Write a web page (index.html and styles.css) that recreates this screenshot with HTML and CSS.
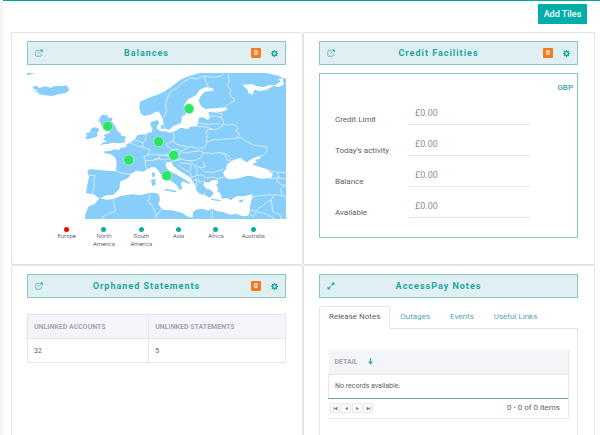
FILE: index.html
```html
<!DOCTYPE html>
<html lang="en">
<head>
<meta charset="utf-8">
<title>Dashboard</title>
<link rel="stylesheet" href="styles.css">
</head>
<body>
<svg class="defs" width="0" height="0" aria-hidden="true">
  <symbol id="open" viewBox="0 0 16 16"><path d="M9 3H3.500Q1.500 3 1.500 5V12.500Q1.500 14.500 3.500 14.500H10.500Q12.500 14.500 12.500 12.500V9M6.500 9.500L13 3" fill="none" stroke="currentColor" stroke-width="1.200"/><path d="M9.500 1H15.500V7Z" fill="currentColor"/></symbol>
  <symbol id="expand" viewBox="0 0 16 16"><path d="M4 12L7 9M9 7L12 4" stroke="currentColor" stroke-width="2.200"/><path d="M9 1H15V7ZM1 9V15H7Z" fill="currentColor"/></symbol>
  <symbol id="gear" viewBox="0 0 16 16"><circle cx="8" cy="8" r="4.300" fill="none" stroke="currentColor" stroke-width="3.200"/><path d="M8 0V3M8 13V16M0 8H3M13 8H16M2.300 2.300L4.500 4.500M11.500 11.500L13.700 13.700M13.700 2.300L11.500 4.500M4.500 11.500L2.300 13.700" stroke="currentColor" stroke-width="2.800"/></symbol>
</svg>
<main class="page">
  <div class="toolbar"><button class="add" type="button">Add Tiles</button></div>
  <div class="tiles">
    <section class="tile">
      <header class="tile-head">
        <button class="icon" type="button" aria-label="Open"><svg><use href="#open"/></svg></button>
        <h2>Balances</h2>
        <div class="actions"><span class="badge">0</span><button class="icon gear" type="button" aria-label="Settings"><svg><use href="#gear"/></svg></button></div>
      </header>
      <svg class="map" viewBox="21 24 777 438" role="img" aria-label="Map of Europe">
        <g class="land">
          <path d="M21 24H45L32 28L21 31Z"/>
          <path d="M37 66L50 62L58 69L75 64L92 68L108 62L125 64L140 61L148 75L137 84L118 87L95 93L70 90L55 88L58 83L44 80L54 76L42 73Z"/>
          <path d="M236 166L246 149L264 151L262 157L278 159L274 169L286 183L292 197L302 205L305 213L318 214L314 226L316 232L300 235L278 233L264 237L250 238L241 242L246 234L262 229L249 224L256 215L251 209L268 205L269 198L259 192L250 178L244 184L242 174Z"/>
          <path d="M212 192L222 187L236 189L237 199L231 202L233 214L220 218L201 223L195 219L202 212L196 205L210 202Z"/>
          <path d="M540 24L510 32L485 42L468 55L450 68L432 80L410 90L390 97L360 110L358 128L362 145L372 153L390 149L405 142L417 139L418 160L408 164L393 168L391 182L397 189L396 201L384 203L380 207L352 210L344 224L332 232L320 238L319 246L301 249L298 255L284 253L271 258L252 259L254 265L272 268L285 277L290 292L288 319L265 317L235 315L216 313L207 313L202 320L207 335L202 360L198 384L215 387L224 389L232 397L240 400L236 402L225 416L205 425L196 448L195 462H798V40L790 40L775 32L740 24Z"/>
        </g>
        <g class="sea">
          <path d="M415 140L427 157L431 175L436 192L448 194L459 184L483 174L486 153L497 150L492 120L505 102L529 90L538 75L557 66L577 69L581 77L555 80L541 94L536 108L543 124L556 132L618 127L622 135L604 140L565 141L570 158L564 165L549 157L537 158L534 174L530 184L510 185L505 193L483 188L468 197L450 203L436 199L424 199L411 192L411 182L418 174L412 165L393 170L388 160Z"/>
          <path d="M241 400L258 391L280 390L298 372L300 350L325 338L333 326L350 317L370 320L382 313L394 307L404 306L413 314L421 326L434 340L454 349L470 360L477 370L471 379L455 374L433 371L434 376L466 382L473 375L487 371L483 357L488 349L505 356L511 353L494 343L474 331L456 322L443 313L437 303L438 292L454 290L459 301L475 315L493 326L512 338L517 349L526 360L529 375L538 386L553 390L553 381L559 385L561 374L550 360L553 351L565 353L576 346L592 345L595 355L588 358L594 368L592 378L602 387L606 402L621 399L632 405L650 394L672 394L698 388L694 407L690 426L689 440L684 452L668 454L650 447L630 449L610 441L589 438L577 430L565 437L548 431L527 434L519 442L518 458L501 454L486 443L456 436L435 435L425 431L415 418L420 404L417 389L408 384L390 383L361 391L340 388L303 392L280 402L260 404Z"/>
          <path d="M609 322L619 312L620 300L634 288L650 281L664 280L669 286L690 295L704 301L738 312L760 327L752 339L721 341L694 333L680 333L656 340L630 343L616 338Z"/>
          <path d="M684 289L702 278L720 275L721 281L704 284L711 290L697 298L684 296Z"/>
          <path d="M667 59L700 58L709 64L731 66L750 60L766 61L782 49L775 42L788 40L791 59L775 66L760 62L741 74L720 78L702 74L698 90L684 83L684 76Z"/>
        </g>
        <g class="land">
          <path d="M422 182L432 178L434 190L424 193ZM395 327L400 320L404 322L404 335L398 337ZM393 344L406 341L407 360L397 363ZM573 401L604 405L599 409L574 405ZM657 406L673 403L667 412L658 411ZM552 375L565 371L581 382L577 391L568 398L555 390Z"/>
        </g>
        <g class="borders">
          <path d="M432 157L440 134L436 117L444 95L453 77L469 72L490 52L510 38L530 42L552 33M552 33L558 52L565 65M552 33L580 37L603 34L612 25M624 27L628 49L622 58L632 77L630 92L646 105L629 115L613 128"/>
          <path d="M571 140L608 146L604 157L611 170L607 183L588 194L576 192L552 185L529 184M537 174L560 178L582 177L600 176M564 153L588 153L606 159M607 178L625 180L644 178L654 190L647 199L660 208L646 220L575 225L559 232L561 212L558 198L576 192M646 220L666 218L678 228L700 240L741 246L740 260L728 272L711 275"/>
          <path d="M459 198L463 215L459 228L468 237L501 246L519 246L535 252L553 248L562 233M459 228L438 236L441 244L457 254L449 267L428 272M457 254L472 253L484 260L501 249M484 260L492 264L519 260L536 258L552 263L541 279L525 286L502 287L482 282L474 274L484 260"/>
          <path d="M379 205L377 222L368 234L370 247L389 254L384 270L371 275L375 285L377 303L383 315M329 235L343 238L352 243L370 247M344 229L354 227L368 234M384 270L405 268L420 270L418 280L399 286L375 287M418 270L438 270L450 277L472 277M399 286L410 280L434 285L454 280L469 285L484 281M454 291L465 287L480 285M480 294L510 296L514 310L507 321L485 309L474 298M511 290L525 302L532 317L529 332L514 337L511 324M525 301L542 308L555 306L551 289M542 308L552 320L582 322L611 312M530 332L548 329L556 339L580 336L594 342L610 336M518 347L530 342L530 365M536 342L538 352L554 349M552 263L579 266L597 262L614 268L620 285L634 288M608 262L624 269L632 281L624 288M287 317L300 324L333 328M207 331L226 331L221 347L223 365L217 385"/>
          <path d="M279 404L285 430L288 438L262 447L246 458L246 462M391 387L384 411L397 421L407 450L408 462M407 455L420 438L425 432M577 431L576 462M689 447L699 455L715 430L730 420L754 404L762 389L703 393L689 411M689 439L704 435L712 442L731 444L754 455L765 462M754 404L758 440L779 448L784 462M762 389L789 393M736 311L765 321L798 323M748 341L775 338L798 342M773 324L777 340L768 346L785 360L798 361M794 361L781 373L786 389L798 398"/>
        </g>
        <g class="pins"><circle cx="263" cy="184" r="15"/><circle cx="326" cy="285" r="15"/><circle cx="416" cy="230" r="15"/><circle cx="507" cy="131" r="15"/><circle cx="461" cy="271" r="15"/><circle cx="440" cy="332" r="15"/></g>
      </svg>
      <ul class="regions">
        <li class="current">Europe</li><li>North America</li><li>South America</li><li>Asia</li><li>Africa</li><li>Australia</li>
      </ul>
    </section>

    <section class="tile">
      <header class="tile-head">
        <button class="icon" type="button" aria-label="Open"><svg><use href="#open"/></svg></button>
        <h2>Credit Facilities</h2>
        <div class="actions"><span class="badge">0</span><button class="icon gear" type="button" aria-label="Settings"><svg><use href="#gear"/></svg></button></div>
      </header>
      <form class="credit">
        <div class="currency">GBP</div>
        <div class="field"><label for="limit">Credit Limit</label><input id="limit" value="£0.00" readonly></div>
        <div class="field"><label for="activity">Today's activity</label><input id="activity" value="£0.00" readonly></div>
        <div class="field"><label for="balance">Balance</label><input id="balance" value="£0.00" readonly></div>
        <div class="field"><label for="available">Available</label><input id="available" value="£0.00" readonly></div>
      </form>
    </section>

    <section class="tile">
      <header class="tile-head">
        <button class="icon" type="button" aria-label="Open"><svg><use href="#open"/></svg></button>
        <h2>Orphaned Statements</h2>
        <div class="actions"><span class="badge">0</span><button class="icon gear" type="button" aria-label="Settings"><svg><use href="#gear"/></svg></button></div>
      </header>
      <table class="statements">
        <thead><tr><th>UNLINKED ACCOUNTS</th><th>UNLINKED STATEMENTS</th></tr></thead>
        <tbody><tr><td>32</td><td>5</td></tr></tbody>
      </table>
    </section>

    <section class="tile">
      <header class="tile-head">
        <button class="icon" type="button" aria-label="Expand"><svg><use href="#expand"/></svg></button>
        <h2>AccessPay Notes</h2>
      </header>
      <nav class="tabs"><a class="active" href="#release">Release Notes</a><a href="#outages">Outages</a><a href="#events">Events</a><a href="#links">Useful Links</a></nav>
      <div class="panel" id="release">
        <div class="grid">
          <table>
            <thead><tr><th>DETAIL <svg class="sort" viewBox="0 0 6 8"><path d="M3 0V6" stroke="currentColor" stroke-width="1.200"/><path d="M0 4H6L3 8Z" fill="currentColor"/></svg></th></tr></thead>
            <tbody><tr><td>No records available.</td></tr></tbody>
          </table>
          <div class="pager">
            <div class="pages">
              <button type="button" aria-label="First page"><svg viewBox="0 0 8 8"><path d="M1 1H2V7H1ZM7 1V7L2 4Z"/></svg></button>
              <button type="button" aria-label="Previous page"><svg viewBox="0 0 8 8"><path d="M6 1V7L2 4Z"/></svg></button>
              <button type="button" aria-label="Next page"><svg viewBox="0 0 8 8"><path d="M2 1V7L6 4Z"/></svg></button>
              <button type="button" aria-label="Last page"><svg viewBox="0 0 8 8"><path d="M6 1H7V7H6ZM1 1V7L6 4Z"/></svg></button>
            </div>
            <span>0 - 0 of 0 items</span>
          </div>
        </div>
      </div>
    </section>
  </div>
</main>
</body>
</html>
```
FILE: styles.css
```css
* { box-sizing: border-box; }
body { margin: 0; background: #fff; color: #5c6064; font: 8px/12px Roboto, "Liberation Sans", sans-serif; }
button, input { font: inherit; color: inherit; }
button { padding: 0; cursor: pointer; }
.defs { position: absolute; }
.page { display: flex; flex-direction: column; height: 100vh; overflow: hidden; border-left: 3px solid #f5f5f5; }
.toolbar { display: flex; justify-content: flex-end; height: 32px; padding: 3px 13px 0 0; border-top: 1px solid #00a5a0; flex: none; }
.add { width: 49px; height: 20px; border: 0; border-radius: 1px; background: #00aea9; color: #fff; font-size: 9px; font-weight: 500; }
.tiles { display: grid; grid-template-columns: 1fr 1fr; grid-template-rows: auto 1fr; flex: 1; margin: 0 5px 0 8px; }
.tile { min-width: 0; padding: 8px 16px 0 15px; border: 1px solid #e3e3e3; border-bottom-color: #e0e0e0; border-radius: 2px; }
.tile:nth-child(n+3) { border-bottom: 0; border-radius: 2px 2px 0 0; }
.tile-head { display: grid; grid-template-columns: 26px 1fr 46px; align-items: center; height: 24px; border: 1px solid #87c7c4; background: #e0f0f2; color: #1aa6a2; }
.tile-head h2 { margin: 0; text-align: center; font-size: 9px; font-weight: 700; letter-spacing: 1px; }
.icon { display: block; width: 9px; height: 8px; margin-left: 7px; border: 0; background: none; }
.icon svg { display: block; width: 8px; height: 8px; }
.actions { display: flex; align-items: center; justify-content: flex-end; gap: 10px; padding-right: 7px; }
.actions .icon { width: 7px; height: 7px; margin: 0; }
.actions svg { width: 7px; height: 7px; }
.badge { width: 10px; height: 10px; border-radius: 1px; background: #f97a1d; color: #fff; text-align: center; font-size: 7px; line-height: 10px; font-weight: 700; }
.map { display: block; width: 100%; margin-top: 8px; }
.land { fill: #87cefa; }
.sea { fill: #fff; }
.borders { fill: none; stroke: #d5ecfa; stroke-width: 3; stroke-linejoin: round; }
.pins { fill: #2be565; stroke: #bff0d0; stroke-width: 2; }
.regions { display: grid; grid-template-columns: repeat(6, 1fr); margin: 8px 14px 16px 21px; padding: 0; list-style: none; color: #222; font-size: 6px; font-weight: 300; line-height: 8px; text-align: center; }
.regions li { padding: 0 7px; display: flex; flex-direction: column; align-items: center; }
.regions li::before { content: ""; width: 5px; height: 5px; border-radius: 50%; background: #12aaa2; }
.regions .current::before { background: #f00; }
.credit { height: 165px; margin-top: 8px; padding: 7px 4px 0 15px; border: 1px solid #87c7bf; }
.currency { height: 20px; text-align: right; color: #35a7a2; font-weight: 500; line-height: 14px; }
.field { display: grid; grid-template-columns: 73px 122px; height: 31px; }
.field label { padding-top: 13px; }
.field input { width: 100%; height: 24px; padding: 0 7px; border: 0; border-bottom: 1px solid #e3e4ec; outline: 0; background: none; color: #8c9298; font-size: 9px; }
table { width: 100%; border-collapse: collapse; text-align: left; }
th { background: #f4f5fa; color: #a2a5b5; font-size: 7px; font-weight: 700; }
th, td { height: 24px; padding: 0 6px; border: 1px solid #e4e6ec; }
td { font-size: 7px; }
.statements { margin-top: 16px; table-layout: fixed; }
.statements th:first-child { width: 47%; }
.tabs { display: flex; margin-top: 8px; border-bottom: 1px solid #e2e4e6; }
.tabs a { height: 22px; padding: 0 9px; border: 1px solid transparent; color: #52aaa7; line-height: 20px; text-decoration: none; }
.tabs .active { margin-bottom: -1px; height: 23px; border-color: #e2e4e6 #e2e4e6 #fff; border-radius: 2px 2px 0 0; background: #fff; color: #5c6064; }
.panel { height: 120px; padding: 21px 8px 0; border: solid #e2e4e6; border-width: 0 1px; }
.grid { border: 1px solid #e4e6ec; border-width: 0 1px 1px 0; }
.grid th { border-width: 0 0 1px; }
.grid td { border-width: 0 0 1px 1px; border-bottom-color: #6ba896; }
.sort { width: 5px; height: 7px; margin-left: 9px; vertical-align: middle; color: #2aaba2; }
.pager { display: flex; align-items: center; justify-content: space-between; height: 19px; padding: 0 8px 0 2px; }
.pages { display: flex; gap: 1px; }
.pages button { display: grid; place-items: center; width: 10px; height: 10px; border: 1px solid #e4e6ea; border-radius: 1px; background: #fff; }
.pages svg { width: 5px; height: 5px; fill: #6b7680; }
```
